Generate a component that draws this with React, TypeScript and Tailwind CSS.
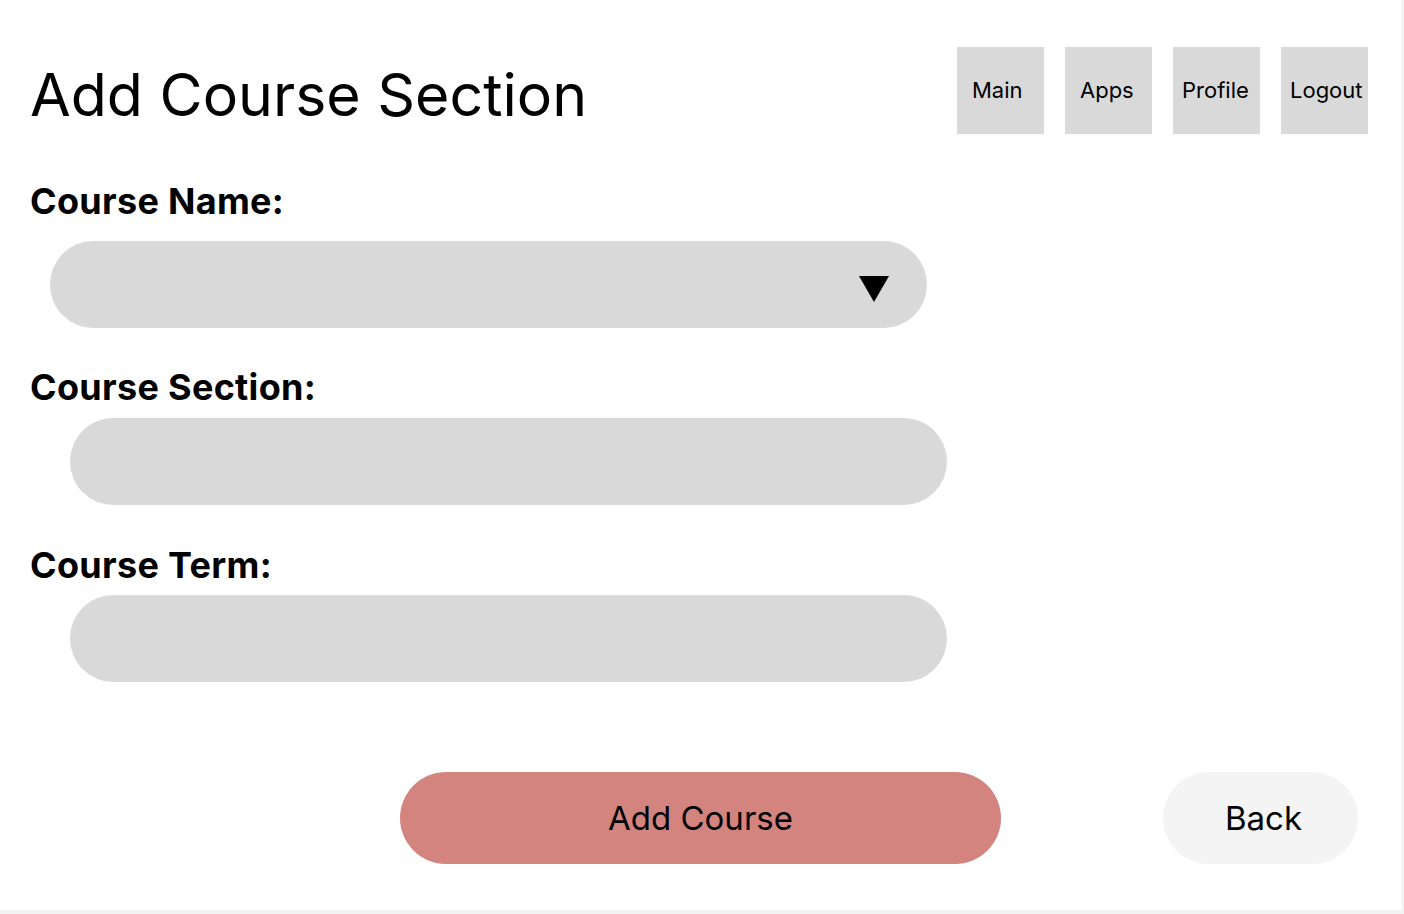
import React from "react";

const navItems = [
  { label: "Main", pad: "pl-[15px]" },
  { label: "Apps", pad: "pl-[15px]" },
  { label: "Profile", pad: "pl-[9px]" },
  { label: "Logout", pad: "pl-[9px]" },
];

export default function App() {
  return (
    <div className="w-[1404px] h-[914px] bg-[#f4f4f4]">
      <div className="w-[1401px] h-[910px] bg-white font-['Inter','Noto_Sans',sans-serif] text-black flex flex-col pt-[47px] pl-[30px] pr-[33px]">
        <div className="flex items-start justify-between">
          <h1 className="mt-[18px] text-[59px] leading-none font-normal">Add Course Section</h1>
          <nav className="flex gap-[21px]">
            {navItems.map((n) => (
              <div
                key={n.label}
                className={`w-[87px] h-[87px] bg-[#d9d9d9] flex items-center pb-[2px] text-[22px] leading-none ${n.pad}`}
              >
                {n.label}
              </div>
            ))}
          </nav>
        </div>

        <label className="mt-[49px] text-[36px] leading-none font-bold tracking-[0.3px]">Course Name:</label>
        <div className="mt-[22px] ml-[20px] w-[877px] h-[87px] rounded-full bg-[#d9d9d9] flex items-center justify-end pr-[38px]">
          <svg width="30" height="26" viewBox="0 0 30 26" className="mt-[8px]">
            <polygon points="0,0 30,0 15,26" fill="#000" />
          </svg>
        </div>

        <label className="mt-[41px] text-[36px] leading-none font-bold tracking-[0.3px]">Course Section:</label>
        <div className="mt-[13px] ml-[40px] w-[877px] h-[87px] rounded-full bg-[#d9d9d9]" />

        <label className="mt-[42px] text-[36px] leading-none font-bold tracking-[0.3px]">Course Term:</label>
        <div className="mt-[12px] ml-[40px] w-[877px] h-[87px] rounded-full bg-[#d9d9d9]" />

        <div className="mt-[90px] flex items-center">
          <button className="ml-[370px] w-[601px] h-[92px] rounded-full bg-[#d3847f] text-[33px] leading-none font-normal flex items-center justify-center">
            Add Course
          </button>
          <button className="ml-[162px] w-[195px] h-[92px] rounded-full bg-[#f4f4f4] pl-[6px] text-[33px] leading-none font-normal flex items-center justify-center">
            Back
          </button>
        </div>
      </div>
    </div>
  );
}
